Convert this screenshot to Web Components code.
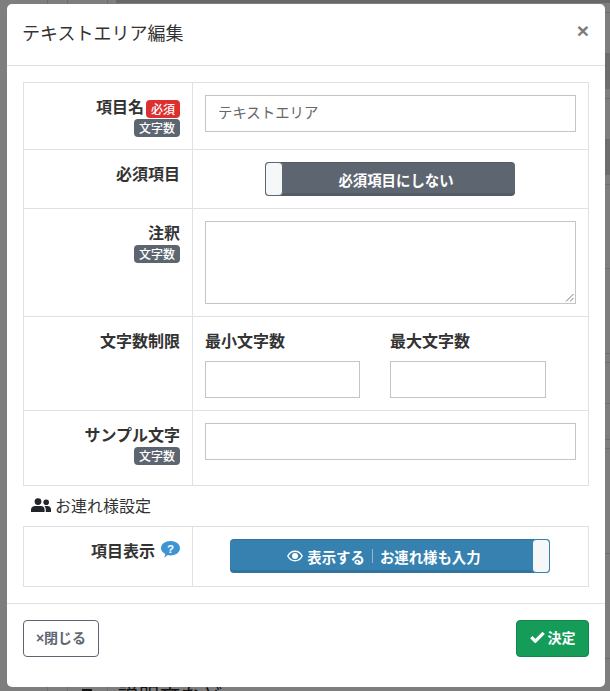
<!DOCTYPE html>
<html lang="ja">
<head>
<meta charset="utf-8">
<title>テキストエリア編集</title>
<style>
  html, body { margin: 0; height: 100%; }
  body { font-family: "Noto Sans CJK JP", "Liberation Sans", sans-serif; color: #212529; }
</style>
</head>
<body>
<edit-backdrop>
  <edit-modal heading="テキストエリア編集">
    <form-table>
      <form-row height="67">
        <span slot="label">項目名<app-badge color="#dc3030">必須</app-badge></span>
        <app-badge slot="label" color="#5d6670" block>文字数</app-badge>
        <text-input value="テキストエリア"></text-input>
      </form-row>
      <form-row height="59">
        <span slot="label">必須項目</span>
        <app-toggle width="250" color="#5d6670" knob="left">必須項目にしない</app-toggle>
      </form-row>
      <form-row height="108">
        <span slot="label">注釈</span>
        <app-badge slot="label" color="#5d6670" block>文字数</app-badge>
        <text-input height="83" resize></text-input>
      </form-row>
      <form-row height="94">
        <span slot="label">文字数制限</span>
        <limit-fields></limit-fields>
      </form-row>
      <form-row height="74" last>
        <span slot="label">サンプル文字</span>
        <app-badge slot="label" color="#5d6670" block>文字数</app-badge>
        <text-input></text-input>
      </form-row>
    </form-table>
    <section-title>お連れ様設定</section-title>
    <form-table>
      <form-row height="59" last>
        <span slot="label">項目表示<help-icon></help-icon></span>
        <app-toggle width="320" color="#3681b0" knob="right">
          <svg width="16" height="12" viewBox="0 0 16 12" style="margin-right:4px"><path d="M.8 6C2.4 3 5 1.2 8 1.2S13.6 3 15.2 6C13.6 9 11 10.8 8 10.8S2.4 9 .8 6z" fill="none" stroke="#fff" stroke-width="1.4"/><circle cx="8" cy="6" r="3" fill="#fff"/></svg>表示する<i class="sep"></i>お連れ様も入力
        </app-toggle>
      </form-row>
    </form-table>
    <app-button slot="footer" kind="close">×閉じる</app-button>
    <app-button slot="footer" kind="ok">
      <svg width="15" height="12" viewBox="0 0 15 12" style="margin-right:3px"><path d="M1.300 6.200l4 4L13.700 1.800" fill="none" stroke="#fff" stroke-width="3.200"/></svg>決定
    </app-button>
  </edit-modal>
</edit-backdrop>

<script>
function shadow(el, html) {
  el.attachShadow({ mode: "open" }).innerHTML = html;
}

// what shows through the dimmed page behind the dialog
const behindLines = [12, 98, 184, 268, 353, 362, 403, 439, 448, 553, 658];
const behindBands = [[53, 36], [139, 36]];
const behindCols = [47, 67, 107];

class EditBackdrop extends HTMLElement {
  constructor() {
    super();
    const lines = behindLines.map(y => `<i class="line" style="top:${y}px"></i>`).join("");
    const bands = behindBands.map(b => `<i class="band" style="top:${b[0]}px;height:${b[1]}px"></i>`).join("");
    const cols = behindCols.map(x => `<i class="col" style="left:${x}px"></i>`).join("");
    shadow(this, `
      <style>
        :host { display: block; position: relative; width: 610px; height: 691px; overflow: hidden; background: #7e7e7e; padding-top: 4px; box-sizing: border-box; }
        i { position: absolute; }
        .line { left: 40px; right: 0; height: 1px; background: #6e6e6e; }
        .band { left: 116px; right: 0; background: #6d6d6d; }
        .col { top: 0; bottom: 0; width: 1px; background: #6e6e6e; }
        .top { left: 116px; right: 0; top: 0; height: 3px; background: #686868; }
        .behind { position: absolute; left: 118px; top: 684px; font-size: 20px; line-height: 22px; letter-spacing: 1px; color: #111; white-space: nowrap; }
        .mark { left: 82px; top: 689px; width: 10px; height: 10px; background: #111; }
      </style>
      ${bands}${lines}${cols}
      <i class="top"></i>
      <i class="mark"></i>
      <div class="behind">説明文など</div>
      <slot></slot>
    `);
  }
}

class EditModal extends HTMLElement {
  constructor() {
    super();
    shadow(this, `
      <style>
        :host { display: block; position: relative; width: 598px; height: 683px; margin-left: 7px; background: #fff; border-radius: 5px; box-sizing: border-box; }
        header { display: flex; justify-content: space-between; height: 62px; box-sizing: border-box; border-bottom: 1px solid #dee2e6; padding: 15px 16px 0 15px; }
        h5 { margin: 0; font-size: 18px; font-weight: 400; line-height: 27px; color: #333; }
        .x { font: 700 21px/24px "Liberation Sans", sans-serif; color: #7b7b7b; }
        main { padding: 16px 16px 0; height: 538px; box-sizing: border-box; border-bottom: 1px solid #dee2e6; }
        footer { display: flex; justify-content: space-between; padding: 16px; }
      </style>
      <header><h5></h5><span class="x">×</span></header>
      <main><slot></slot></main>
      <footer><slot name="footer"></slot></footer>
    `);
    this.shadowRoot.querySelector("h5").textContent = this.getAttribute("heading");
  }
}

class FormTable extends HTMLElement {
  constructor() {
    super();
    shadow(this, `
      <style>
        :host { display: block; border: 1px solid #dee2e6; }
      </style>
      <slot></slot>
    `);
  }
}

class FormRow extends HTMLElement {
  constructor() {
    super();
    const h = this.getAttribute("height");
    shadow(this, `
      <style>
        :host { display: grid; grid-template-columns: 169px 1fr; height: ${h}px; box-sizing: border-box; }
        :host(:not([last])) { border-bottom: 1px solid #dee2e6; }
        .label { border-right: 1px solid #dee2e6; padding: 11px 12px 0 0; text-align: right; font-size: 16px; font-weight: 700; line-height: 24px; color: #333; }
        .value { padding: 12px 12px 0; min-width: 0; }
      </style>
      <div class="label"><slot name="label"></slot></div>
      <div class="value"><slot></slot></div>
    `);
  }
}

class AppBadge extends HTMLElement {
  constructor() {
    super();
    const block = this.hasAttribute("block");
    shadow(this, `
      <style>
        :host { display: ${block ? "block" : "inline-block"}; vertical-align: top; ${block ? "line-height:18px;margin-top:1px;" : ""} }
        span { display: inline-block; vertical-align: top; height: 18px; line-height: 18px; padding: 0 5px; margin: ${block ? 0 : "6px 0 0 2px"}; border-radius: 4px; font-size: 12px; font-weight: 500; color: #fff; background: ${this.getAttribute("color")}; }
      </style>
      <span><slot></slot></span>
    `);
  }
}

class TextInput extends HTMLElement {
  constructor() {
    super();
    const h = this.getAttribute("height") || 37;
    const grip = this.hasAttribute("resize")
      ? `<svg width="9" height="9" viewBox="0 0 9 9"><path d="M1 8.500L8.500 1M5 8.500L8.500 5" stroke="#777" fill="none"/></svg>` : "";
    shadow(this, `
      <style>
        :host { display: block; position: relative; height: ${h}px; box-sizing: border-box; border: 1px solid #c4c4c4; padding: 0 12px; font-size: 14.4px; line-height: 31px; color: #666; background: #fff; }
        svg { position: absolute; right: 1px; bottom: 1px; }
      </style>
      <span></span>${grip}
    `);
    this.shadowRoot.querySelector("span").textContent = this.getAttribute("value") || "";
  }
}

class LimitFields extends HTMLElement {
  constructor() {
    super();
    shadow(this, `
      <style>
        :host { display: grid; grid-template-columns: 155px 156px; column-gap: 30px; margin-top: -1px; font-size: 16px; font-weight: 700; line-height: 24px; color: #333; }
        label { display: block; margin-bottom: 9px; }
      </style>
      <div><label>最小文字数</label><text-input></text-input></div>
      <div><label>最大文字数</label><text-input></text-input></div>
    `);
  }
}

class AppToggle extends HTMLElement {
  constructor() {
    super();
    const w = this.getAttribute("width");
    const c = this.getAttribute("color");
    const right = this.getAttribute("knob") === "right";
    shadow(this, `
      <style>
        :host { display: block; position: relative; box-sizing: border-box; width: ${w}px; height: 34px; margin-left: calc((100% - ${w}px) / 2 - .5px); border-radius: 4px; background: ${c}; box-shadow: inset 0 -3px 0 rgba(0,0,0,.1), inset 0 1px 0 rgba(0,0,0,.1); color: #fff; font-size: 14.4px; font-weight: 700; }
        .text { display: flex; align-items: center; justify-content: center; height: 100%; padding: ${right ? "0 12px 0 0" : "0 0 0 12px"}; box-sizing: border-box; }
        .knob { position: absolute; top: 0; bottom: 0; ${right ? "right" : "left"}: 0; width: 16px; background: #f6f7f9; border: 1px solid ${c}; border-radius: 4px; }
        ::slotted(i.sep) { display: inline-block; width: 1px; height: 14px; background: rgba(255,255,255,.45); margin: 0 7px; }
      </style>
      <div class="text"><slot></slot></div>
      <div class="knob"></div>
    `);
  }
}

class SectionTitle extends HTMLElement {
  constructor() {
    super();
    shadow(this, `
      <style>
        :host { display: flex; align-items: center; height: 40px; box-sizing: border-box; padding: 0 0 2px 8px; font-size: 16px; color: #333; }
        svg { margin-right: 4px; }
      </style>
      <svg width="20" height="14" viewBox="0 0 20 14" fill="#212529">
        <circle cx="7" cy="3.600" r="3.400"/><path d="M0 14v-2.200C0 9.200 2 8 4 8h6c2 0 3.600 1.200 3.600 3.800V14z"/>
        <circle cx="15.200" cy="4.200" r="2.800"/><path d="M14.800 14v-2.500c0-1.300-.5-2.500-1.400-3.300.6-.2 1-.2 1.600-.2h1.400c2 0 3.600 1.200 3.600 3.600V14z"/>
      </svg>
      <span><slot></slot></span>
    `);
  }
}

class HelpIcon extends HTMLElement {
  constructor() {
    super();
    shadow(this, `
      <style>
        :host { display: inline-block; margin-left: 6px; vertical-align: top; margin-top: 3px; }
        svg { display: block; }
      </style>
      <svg width="19" height="17" viewBox="0 0 19 17">
        <path d="M9.500 0C14.700 0 19 3.100 19 7.200s-4.300 7.200-9.500 7.200c-1 0-1.900-.1-2.700-.3C5.600 15.300 4 16.300 3 16.600c.8-1 1.200-2.300 1.300-3.700C1.700 11.600 0 9.600 0 7.200 0 3.100 4.300 0 9.500 0z" fill="#3f94d4"/>
        <text x="9.500" y="11.500" text-anchor="middle" font-family="Liberation Sans, sans-serif" font-size="11.500" font-weight="700" fill="#fff">?</text>
      </svg>
    `);
  }
}

class AppButton extends HTMLElement {
  constructor() {
    super();
    const ok = this.getAttribute("kind") === "ok";
    shadow(this, `
      <style>
        :host { display: inline-flex; align-items: center; justify-content: center; box-sizing: border-box; height: 37px; width: ${ok ? 73 : 76}px; padding-bottom: 3px; border-radius: 4px; font-family: "Liberation Sans", "Noto Sans CJK JP", sans-serif; font-size: 14px; font-weight: 700; border: 1px solid ${ok ? "#13864d" : "#5d6670"}; color: ${ok ? "#fff" : "#5d6670"}; background: ${ok ? "#159c58" : "#fff"}; }
      </style>
      <slot></slot>
    `);
  }
}

customElements.define("edit-backdrop", EditBackdrop);
customElements.define("edit-modal", EditModal);
customElements.define("form-table", FormTable);
customElements.define("form-row", FormRow);
customElements.define("app-badge", AppBadge);
customElements.define("text-input", TextInput);
customElements.define("limit-fields", LimitFields);
customElements.define("app-toggle", AppToggle);
customElements.define("section-title", SectionTitle);
customElements.define("help-icon", HelpIcon);
customElements.define("app-button", AppButton);
</script>
</body>
</html>
